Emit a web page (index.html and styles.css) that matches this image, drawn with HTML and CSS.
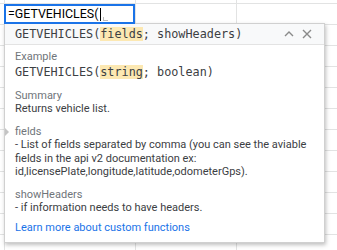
FILE: index.html
```html
<!DOCTYPE html>
<html>
<head>
<meta charset="utf-8">
<link rel="stylesheet" href="styles.css">
</head>
<body>
<div class="sheet">
  <div class="editor">
    <span class="formula">=GETVEHICLES(</span><span class="caret"></span><span class="corner"></span>
  </div>
  <div class="popup">
    <div class="popup-head">
      <span class="sig">GETVEHICLES(<span class="hl">fields</span>; showHeaders)</span>
      <span class="tools">
        <svg class="ico" width="10" height="8" viewBox="0 0 10 8"><polyline points="1,6 5,2 9,6" fill="none" stroke="#8a8a8a" stroke-width="1.4"/></svg>
        <svg class="ico" width="10" height="10" viewBox="0 0 10 10"><path d="M1 1 L9 9 M9 1 L1 9" stroke="#8a8a8a" stroke-width="1.4"/></svg>
      </span>
    </div>
    <div class="popup-body">
      <div class="section">
        <div class="label">Example</div>
        <div class="code">GETVEHICLES(<span class="hl">string</span>; boolean)</div>
      </div>
      <div class="section">
        <div class="label">Summary</div>
        <div class="text">Returns vehicle list.</div>
      </div>
      <div class="section param">
        <div class="label">fields</div>
        <div class="text">- List of fields separated by comma (you can see the aviable fields in the api v2 documentation ex: id,licensePlate,longitude,latitude,odometerGps).</div>
      </div>
      <div class="section">
        <div class="label">showHeaders</div>
        <div class="text">- if information needs to have headers.</div>
      </div>
      <div class="section link-row">
        <a class="link" href="#">Learn more about custom functions</a>
      </div>
    </div>
  </div>
</div>
</body>
</html>
```

FILE: styles.css
```css
html, body {
  margin: 0;
  padding: 0;
  background: #fff;
}

.sheet {
  position: relative;
  width: 337px;
  height: 250px;
  overflow: hidden;
  font-family: Roboto, "Liberation Sans", sans-serif;
  background-color: #fff;
  background-image:
    linear-gradient(to right, transparent 4px, #e2e3e3 4px, #e2e3e3 5px, transparent 5px),
    linear-gradient(to right, transparent 135px, #e2e3e3 135px, #e2e3e3 136px, transparent 136px),
    linear-gradient(to right, transparent 236px, #e2e3e3 236px, #e2e3e3 237px, transparent 237px),
    linear-gradient(to bottom, #e2e3e3 1px, transparent 1px);
  background-size: 100% 100%, 100% 100%, 100% 100%, 100% 21px;
  background-position: 0 0, 0 0, 0 0, 0 3px;
  background-repeat: no-repeat, no-repeat, no-repeat, repeat-y;
}

.editor {
  position: absolute;
  left: 4px;
  top: 4px;
  width: 127px;
  height: 16px;
  border: 2px solid #1a73e8;
  background: #fff;
  display: flex;
  align-items: center;
  z-index: 2;
}

.formula {
  font-size: 12.4px;
  color: #000;
  padding-left: 2px;
  line-height: 16px;
}

.caret {
  width: 1px;
  height: 13px;
  background: #000;
  margin-left: 2px;
}

.corner {
  width: 4px;
  height: 3px;
  border-left: 1px solid #bbb;
  border-bottom: 1px solid #bbb;
  margin-left: 2px;
  align-self: flex-end;
  margin-bottom: 1px;
}

.popup {
  position: absolute;
  left: 4px;
  top: 23px;
  width: 319px;
  border: 1px solid #d0d0d0;
  background: #fff;
  box-shadow: 1px 2px 4px rgba(0, 0, 0, 0.25);
  z-index: 1;
}

.popup-head {
  height: 21px;
  background: #f8f9fa;
  border-bottom: 1px solid #e3e3e3;
  display: flex;
  align-items: center;
  justify-content: space-between;
  padding: 0 10px;
  box-sizing: border-box;
}

.sig, .code {
  font-family: "DejaVu Sans Mono", "Liberation Mono", monospace;
  font-size: 11.8px;
  color: #3c4043;
  white-space: nowrap;
}

.hl {
  background: #fce8b2;
}

.tools {
  display: flex;
  align-items: center;
  gap: 8px;
  padding-right: 2px;
}

.ico {
  display: block;
}

.popup-body {
  padding: 5px 10px 8px 10px;
  font-size: 11px;
  line-height: 13.5px;
}

.section {
  position: relative;
  margin-bottom: 9px;
}

.section.link-row {
  margin-top: -3px;
  margin-bottom: 0;
}

.label {
  color: #70757a;
}

.text {
  color: #3c4043;
}

.code {
  line-height: 15px;
  margin-top: 1px;
}

.param::before {
  content: "";
  position: absolute;
  left: -10px;
  top: 3px;
  border-left: 4px solid #c4c4c4;
  border-top: 4px solid transparent;
  border-bottom: 4px solid transparent;
}

.link {
  color: #1a73e8;
  text-decoration: none;
}
```
